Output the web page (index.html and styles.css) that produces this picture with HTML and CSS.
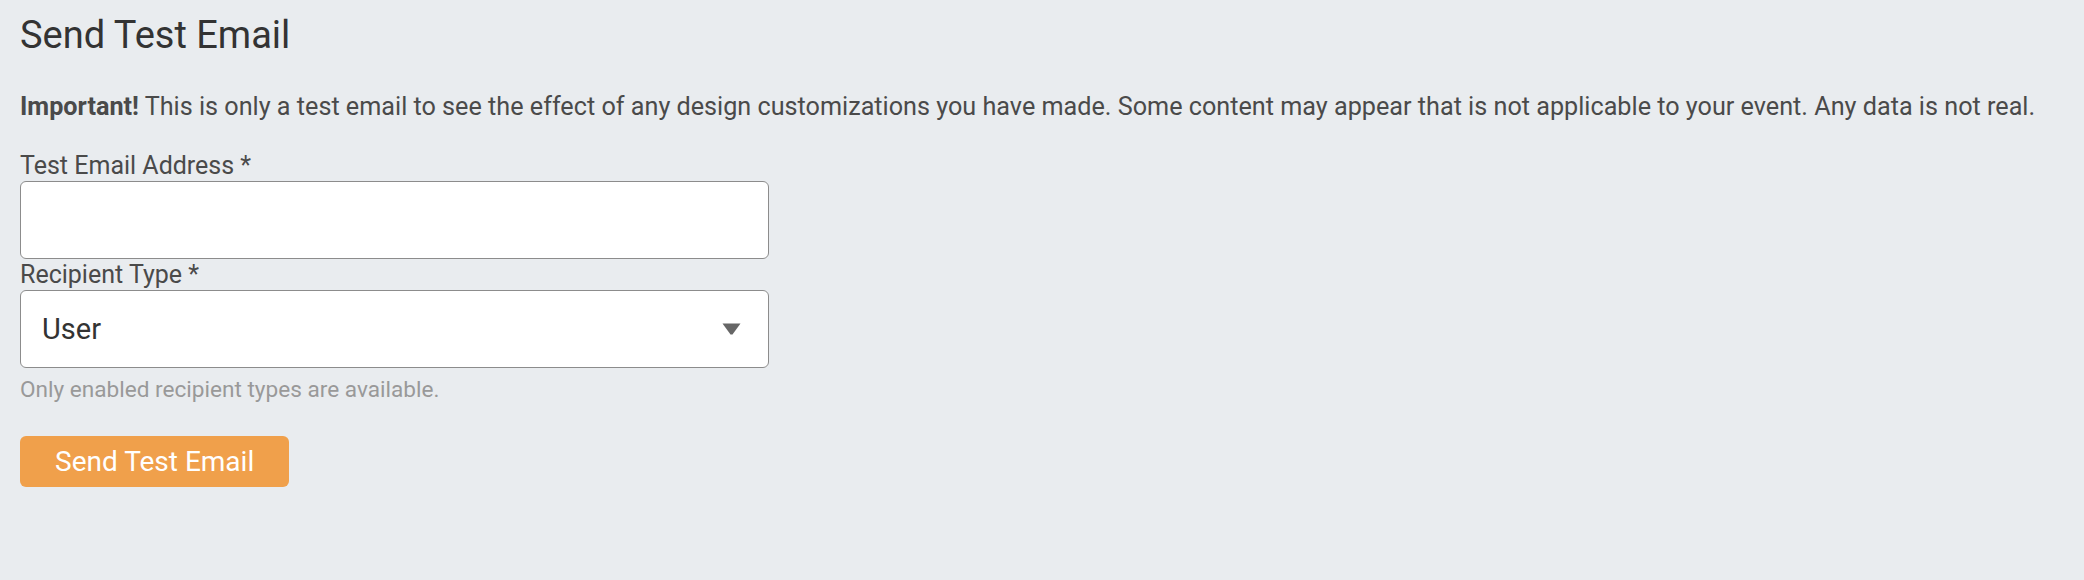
FILE: index.html
```html
<!DOCTYPE html>
<html lang="en">
<head>
<meta charset="utf-8">
<title>Send Test Email</title>
<link rel="stylesheet" href="styles.css">
</head>
<body>
<main class="page">
  <h2 class="title">Send Test Email</h2>
  <p class="notice"><strong>Important!</strong> This is only a test email to see the effect of any design customizations you have made. Some content may appear that is not applicable to your event. Any data is not real.</p>
  <form class="form">
    <label class="label" for="email">Test Email Address *</label>
    <input class="field" id="email" type="email">
    <label class="label" for="rtype">Recipient Type *</label>
    <div class="select">
      <span class="select-value">User</span>
      <svg class="caret" width="19" height="12" viewBox="0 0 19 12"><path d="M0.5 0.5 H18.5 L10.5 11.5 H8.5 Z" fill="#666"/></svg>
    </div>
    <div class="help">Only enabled recipient types are available.</div>
    <button class="btn" type="button">Send Test Email</button>
  </form>
</main>
</body>
</html>
```

FILE: styles.css
```css
html, body {
  margin: 0;
  padding: 0;
  background: #e9ecef;
  font-family: Roboto, "Liberation Sans", sans-serif;
  color: #444;
}
.page {
  padding: 12px 20px 20px;
}
.title {
  margin: 0;
  font-size: 38px;
  line-height: 46px;
  font-weight: 400;
  color: #333;
}
.notice {
  margin: 32px 0 0;
  font-size: 25.2px;
  line-height: 34px;
  color: #4a4a4a;
}
.notice strong {
  font-weight: 700;
}
.form {
  margin-top: 26px;
  display: flex;
  flex-direction: column;
  align-items: flex-start;
}
.label {
  font-size: 25px;
  line-height: 31px;
  color: #4a4a4a;
}
.field {
  box-sizing: border-box;
  width: 749px;
  height: 78px;
  margin: 0;
  border: 1px solid #8c8c8c;
  border-radius: 6px;
  background: #fff;
  font: inherit;
}
.select {
  box-sizing: border-box;
  width: 749px;
  height: 78px;
  border: 1px solid #8c8c8c;
  border-radius: 6px;
  background: #fff;
  display: flex;
  align-items: center;
  justify-content: space-between;
  padding: 0 27px 0 21px;
}
.select-value {
  font-size: 29px;
  color: #333;
}
.caret {
  display: block;
}
.help {
  margin-top: 8px;
  font-size: 22.6px;
  line-height: 28px;
  color: #999;
}
.btn {
  margin-top: 32px;
  height: 51px;
  padding: 0 35px;
  border: 0;
  border-radius: 6px;
  background: #f0a04b;
  color: #fff;
  font-family: Roboto, "Liberation Sans", sans-serif;
  font-size: 28px;
  line-height: 51px;
}
```
